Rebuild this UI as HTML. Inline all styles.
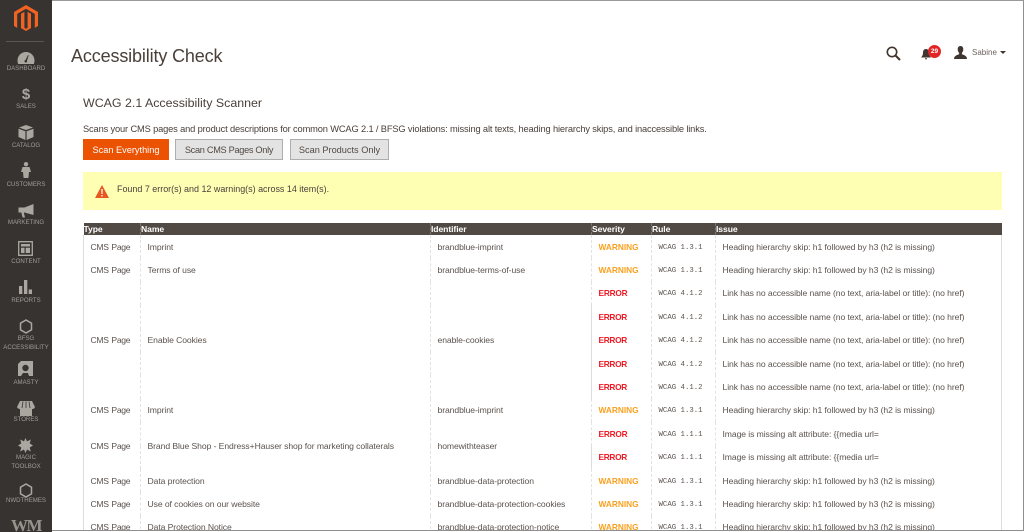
<!DOCTYPE html>
<html lang="en"><head><meta charset="utf-8"><title>Accessibility Check</title>
<style>
*{box-sizing:border-box}
html,body{margin:0;padding:0;width:1024px;height:532px;overflow:hidden;background:#fff;font-family:"Liberation Sans",sans-serif;color:#41362f}
#page{position:absolute;left:0;top:0;width:1024px;height:532px;overflow:hidden;background:#fff}
#clip{position:absolute;left:0;top:0;width:1024px;height:531px;overflow:hidden}
.abs{position:absolute;white-space:nowrap}
#frame{position:absolute;left:0;top:0;width:1024px;height:531px;border:1px solid #8f8f8f;border-left:0;border-top:1px solid #9a9a9a;z-index:9;pointer-events:none}
#side{position:absolute;left:0;top:0;width:52px;height:532px;background:#373330;overflow:hidden;z-index:10}
#side .lbl{position:absolute;left:0;width:52px;text-align:center;font-size:6.1px;line-height:9px;color:#a09c96;white-space:nowrap}
#side svg{position:absolute}
h1{position:absolute;left:71px;top:44px;margin:0;font-size:18px;line-height:24px;letter-spacing:-.14px;font-weight:400;color:#4a403a;white-space:nowrap}
h2{position:absolute;left:83px;top:95px;margin:0;font-size:12.4px;line-height:16px;font-weight:400;color:#4a403a;white-space:nowrap}
.btn{position:absolute;top:139px;height:21px;font-size:9.2px;line-height:20px;text-align:center;border:1px solid #adadad;background:#e3e3e3;color:#514943;white-space:nowrap}
.pri{background:#eb5202;border-color:#eb5202;color:#fff}
#msg{position:absolute;left:83px;top:172px;width:919px;height:38px;background:#ffffb4}
table{position:absolute;left:83px;top:223px;width:918px;border-collapse:collapse;table-layout:fixed;font-size:8.6px;letter-spacing:-.08px;color:#5b534e}
th{height:12px;padding:0;background:#514943;color:#fff;text-align:left;font-size:8.6px;line-height:12px;font-weight:700;border-left:1px dashed #7b726c;white-space:nowrap}
th:first-child{border-left:0}
td{height:23.4px;padding:0 0 0 6.5px;border-left:1px dashed #e2e2e2;white-space:nowrap;overflow:hidden;line-height:12px}
td:first-child{border-left:1px solid #dcdcdc;letter-spacing:-.3px;word-spacing:.6px}
td:last-child{border-right:1px solid #dcdcdc}
.w{color:#f9a11f;font-weight:700;font-size:8.3px;letter-spacing:0}
.e{color:#ef1a24;font-weight:700;font-size:8.3px;letter-spacing:-.2px}
.r{font-family:"Liberation Mono",monospace;font-size:7.35px;letter-spacing:0;color:#5b534e;padding-top:2px}
</style></head><body>
<div id="page">
<div id="clip">
<h1>Accessibility Check</h1>
<svg class="abs" style="left:886px;top:46px" width="15" height="15" viewBox="0 0 15 15"><circle cx="6" cy="6" r="4.700" fill="none" stroke="#41362f" stroke-width="1.600"/><path stroke="#41362f" stroke-width="2" d="M9.500 9.500l4.500 4.500"/></svg>
<svg class="abs" style="left:921px;top:49px" width="10" height="11" viewBox="0 0 10 11"><path fill="#41362f" d="M5 0C7.500 0 8 2 8 4c0 2 .8 3.300 2 4.500H0C1.200 7.300 2 6 2 4c0-2 .5-4 3-4zM3.800 9.300h2.400a1.200 1.200 0 0 1-2.400 0z"/></svg>
<div class="abs" style="left:928px;top:45px;width:13px;height:13px;border-radius:50%;background:#e22626;color:#fff;font-size:6.500px;font-weight:700;line-height:13px;text-align:center">29</div>
<svg class="abs" style="left:954px;top:46px" width="13" height="13" viewBox="0 0 13 13"><path fill="#41362f" d="M6.500 0C8.500 0 9.300 1.500 9.300 3.300c0 1.500-.7 3-1.400 3.700v1.300C10 9 13 10 13 13H0c0-3 3-4 5.100-4.700V7C4.400 6.300 3.700 4.800 3.700 3.300 3.700 1.500 4.500 0 6.500 0z"/></svg>
<div class="abs" style="left:972px;top:47px;font-size:8px;line-height:12px;color:#6b6460">Sabine</div>
<div class="abs" style="left:1000px;top:51px;width:0;height:0;border-left:3px solid transparent;border-right:3px solid transparent;border-top:3.500px solid #41362f"></div>

<h2>WCAG 2.1 Accessibility Scanner</h2>
<div class="abs" style="left:83px;top:123px;font-size:9.300px;letter-spacing:-.15px;line-height:13px;color:#4a403a">Scans your CMS pages and product descriptions for common WCAG 2.1 / BFSG violations: missing alt texts, heading hierarchy skips, and inaccessible links.</div>
<div class="btn pri" style="left:83px;width:86px">Scan Everything</div>
<div class="btn" style="left:175px;width:108px;letter-spacing:-.3px">Scan CMS Pages Only</div>
<div class="btn" style="left:290px;width:99px">Scan Products Only</div>
<div id="msg"></div>
<svg class="abs" style="left:95px;top:185px" width="14" height="13" viewBox="0 0 14 13"><path fill="#e8571d" d="M7 0l7 13H0z"/><path fill="#fff" d="M6.300 4h1.400l-.2 5h-1zM6.300 10h1.400v1.400H6.300z"/></svg>
<div class="abs" style="left:117px;top:183px;font-size:8.950px;line-height:13px;color:#4a403a">Found 7 error(s) and 12 warning(s) across 14 item(s).</div>

<table>
<colgroup><col style="width:57px"><col style="width:290px"><col style="width:161px"><col style="width:60px"><col style="width:64px"><col style="width:286px"></colgroup>
<tr><th>Type</th><th>Name</th><th>Identifier</th><th>Severity</th><th>Rule</th><th>Issue</th></tr>
<tr><td>CMS Page</td><td>Imprint</td><td>brandblue-imprint</td><td class="w">WARNING</td><td class="r">WCAG 1.3.1</td><td>Heading hierarchy skip: h1 followed by h3 (h2 is missing)</td></tr>
<tr><td>CMS Page</td><td>Terms of use</td><td>brandblue-terms-of-use</td><td class="w">WARNING</td><td class="r">WCAG 1.3.1</td><td>Heading hierarchy skip: h1 followed by h3 (h2 is missing)</td></tr>
<tr><td rowspan="5">CMS Page</td><td rowspan="5">Enable Cookies</td><td rowspan="5">enable-cookies</td><td class="e">ERROR</td><td class="r">WCAG 4.1.2</td><td>Link has no accessible name (no text, aria-label or title): (no href)</td></tr>
<tr><td class="e">ERROR</td><td class="r">WCAG 4.1.2</td><td>Link has no accessible name (no text, aria-label or title): (no href)</td></tr>
<tr><td class="e">ERROR</td><td class="r">WCAG 4.1.2</td><td>Link has no accessible name (no text, aria-label or title): (no href)</td></tr>
<tr><td class="e">ERROR</td><td class="r">WCAG 4.1.2</td><td>Link has no accessible name (no text, aria-label or title): (no href)</td></tr>
<tr><td class="e">ERROR</td><td class="r">WCAG 4.1.2</td><td>Link has no accessible name (no text, aria-label or title): (no href)</td></tr>
<tr><td>CMS Page</td><td>Imprint</td><td>brandblue-imprint</td><td class="w">WARNING</td><td class="r">WCAG 1.3.1</td><td>Heading hierarchy skip: h1 followed by h3 (h2 is missing)</td></tr>
<tr><td rowspan="2">CMS Page</td><td rowspan="2">Brand Blue Shop - Endress+Hauser shop for marketing collaterals</td><td rowspan="2">homewithteaser</td><td class="e">ERROR</td><td class="r">WCAG 1.1.1</td><td>Image is missing alt attribute: {{media url=</td></tr>
<tr><td class="e">ERROR</td><td class="r">WCAG 1.1.1</td><td>Image is missing alt attribute: {{media url=</td></tr>
<tr><td>CMS Page</td><td>Data protection</td><td>brandblue-data-protection</td><td class="w">WARNING</td><td class="r">WCAG 1.3.1</td><td>Heading hierarchy skip: h1 followed by h3 (h2 is missing)</td></tr>
<tr><td>CMS Page</td><td>Use of cookies on our website</td><td>brandblue-data-protection-cookies</td><td class="w">WARNING</td><td class="r">WCAG 1.3.1</td><td>Heading hierarchy skip: h1 followed by h3 (h2 is missing)</td></tr>
<tr><td>CMS Page</td><td>Data Protection Notice</td><td>brandblue-data-protection-notice</td><td class="w">WARNING</td><td class="r">WCAG 1.3.1</td><td>Heading hierarchy skip: h1 followed by h3 (h2 is missing)</td></tr>
</table>
</div>
<div id="side">
<svg style="left:14px;top:5px" width="24" height="28" viewBox="0 0 24 28"><path fill="#f26322" d="M12 0 24 7v14l-3.200 1.900V8.900L12 3.800 3.200 8.900v14L0 21V7z"/><path fill="#f26322" d="M10.400 6.800 7 8.800v14.300l5 2.900 5-2.900V8.800l-3.400-2v16l-1.600 1-1.600-1z"/></svg>
<div style="position:absolute;left:6px;top:41px;width:38px;height:1px;background:#5b5652"></div>
<svg style="left:17px;top:51px" width="18" height="14" viewBox="0 0 18 14"><path fill="#aaa6a0" d="M9 1C4 1 .5 5 .5 9.500c0 1.200.2 2.300.6 3.500h15.800c.4-1.200.6-2.300.6-3.500C17.500 5 14 1 9 1z"/><path fill="#373330" d="M8.500 9 11 4l.7.300L10 9.800a1.300 1.300 0 1 1-1.500-.8z"/></svg>
<div class="lbl" style="top:64px">DASHBOARD</div>
<div class="abs" style="left:18px;top:87px;width:16px;text-align:center;font-size:15px;line-height:16px;font-weight:700;color:#aaa6a0">$</div>
<div class="lbl" style="top:102px">SALES</div>
<svg style="left:18px;top:125px" width="16" height="15" viewBox="0 0 16 15"><path fill="#aaa6a0" d="M8 0 15 2.500 8 5 1 2.500zM.5 3.800 7.400 6.300V15L.5 12zM15.500 3.800 8.600 6.300V15l6.900-3z"/></svg>
<div class="lbl" style="top:141px">CATALOG</div>
<svg style="left:21px;top:162px" width="10" height="16" viewBox="0 0 10 16"><circle cx="5" cy="2.200" r="2.200" fill="#aaa6a0"/><path fill="#aaa6a0" d="M1.500 5h7L10 10H8l-.6 6H2.600L2 10H0z"/></svg>
<div class="lbl" style="top:180px">CUSTOMERS</div>
<svg style="left:18px;top:204px" width="16" height="14" viewBox="0 0 16 14"><path fill="#aaa6a0" d="M15.500 0v11L6.500 8.500H5.800l1.200 5H4.600L3.300 8.500H.5V3.500h6z"/></svg>
<div class="lbl" style="top:218px">MARKETING</div>
<svg style="left:18px;top:241px" width="15" height="15" viewBox="0 0 15 15"><path fill="none" stroke="#aaa6a0" stroke-width="1.300" d="M.7.700h13.600v13.600H.7z"/><path fill="#aaa6a0" d="M3 3h9v2.500H3zM3 6.700h3.500V12H3zM7.700 6.700H12V12H7.700z"/></svg>
<div class="lbl" style="top:257px">CONTENT</div>
<svg style="left:19px;top:280px" width="13" height="14" viewBox="0 0 13 14"><path fill="#aaa6a0" d="M0 6h3.300v8H0zM5 0h3.300v14H5zM9.700 9.500H13V14H9.700z"/></svg>
<div class="lbl" style="top:296px">REPORTS</div>
<svg style="left:19px;top:319px" width="14" height="15" viewBox="0 0 14 15"><path fill="none" stroke="#aaa6a0" stroke-width="1.500" d="M7 1l5.500 3.200v6.600L7 14 1.500 10.800V4.200z"/></svg>
<div class="lbl" style="top:334px">BFSG</div>
<div class="lbl" style="top:343px">ACCESSIBILITY</div>
<svg style="left:18px;top:361px" width="15" height="15" viewBox="0 0 15 15"><path fill="#aaa6a0" d="M3 0h12v15h-4l-1-3H5L3 15H0V3z"/><circle cx="7.500" cy="7" r="3.200" fill="#373330"/></svg>
<div class="lbl" style="top:378px">AMASTY</div>
<svg style="left:17px;top:401px" width="18" height="15" viewBox="0 0 18 15"><path fill="#aaa6a0" d="M3 0h12l3 6c-.4 1.300-1.400 2-2.500 2L15 8v7H3V8C1.800 8 .5 7.300 0 6z"/><path stroke="#373330" stroke-width=".8" d="M6 .5 5 7M9 .5V7M12 .5l1 6.500"/></svg>
<div class="lbl" style="top:415px">STORES</div>
<svg style="left:18px;top:438px" width="15" height="15" viewBox="0 0 15 15"><path fill="#aaa6a0" d="M7.500 0 9 3.400 12.800 1.500 11.700 5.400 15 7.500l-3.300 2 1.100 4-3.800-2L7.500 15 6 11.500l-3.800 2 1.100-4L0 7.500l3.300-2.100L2.200 1.500 6 3.400z"/></svg>
<div class="lbl" style="top:453px">MAGIC</div>
<div class="lbl" style="top:462px">TOOLBOX</div>
<svg style="left:19px;top:483px" width="14" height="15" viewBox="0 0 14 15"><path fill="none" stroke="#aaa6a0" stroke-width="1.500" d="M7 1l5.500 3.200v6.600L7 14 1.500 10.800V4.200z"/></svg>
<div class="lbl" style="top:496px">NWDTHEMES</div>
<div class="abs" style="left:11px;top:517px;font-family:'Liberation Serif',serif;font-size:17px;line-height:18px;font-weight:700;color:#96928c;letter-spacing:-1.500px">WM</div>
</div>
<div id="frame"></div>
</div>
</body></html>
